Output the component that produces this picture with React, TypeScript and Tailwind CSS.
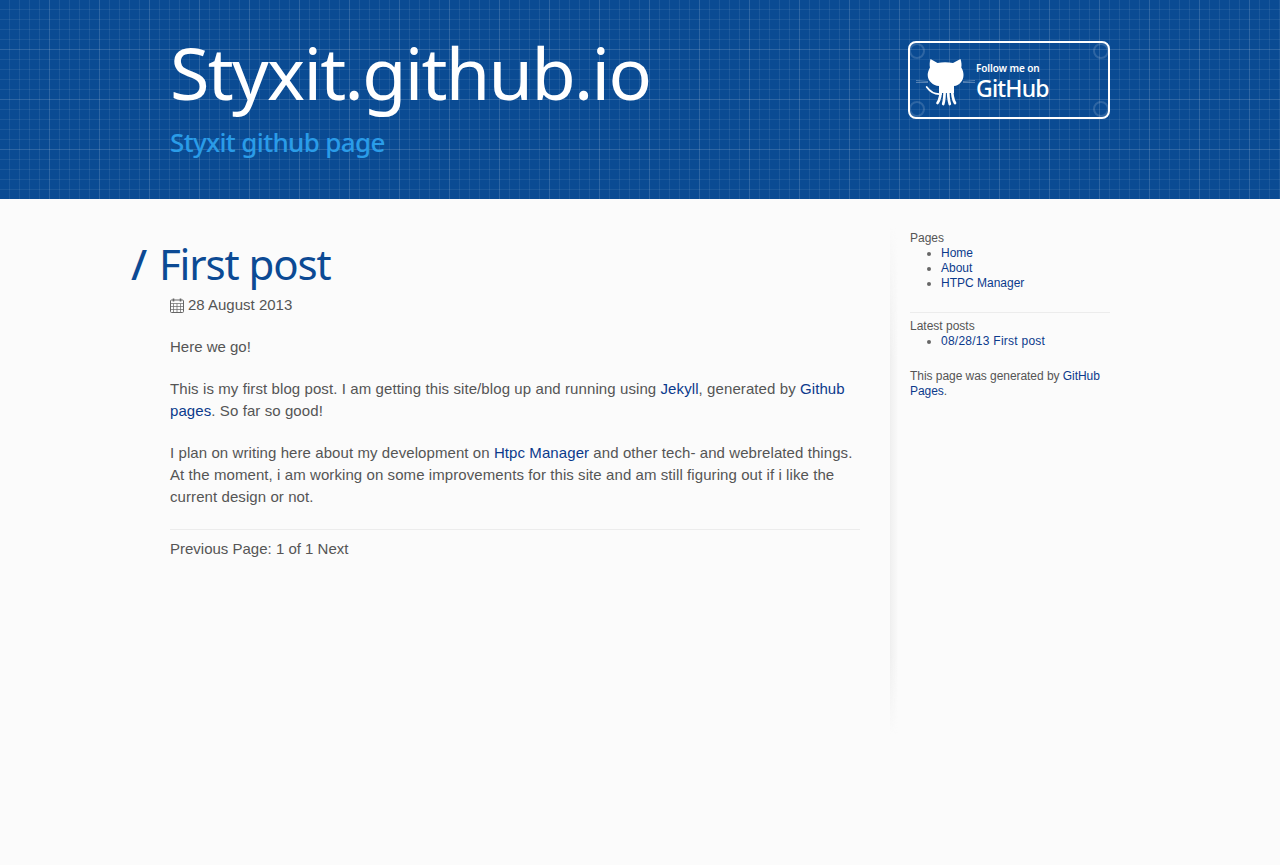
import React from 'react';

const linkClass = 'text-[#0b3a8c]';

function Octocat() {
  return (
    <svg viewBox="0 0 60 52" className="w-[60px] h-[52px] mt-[6px] shrink-0 text-white" fill="none" stroke="currentColor">
      <path
        d="M14.5 2 L21.5 6 C26 5 32 5 37 6 L44.5 2 C45.5 5 45.8 8 45.3 10.5 C47 13 47.5 16 47.5 18 C47.5 24 43 28.5 38 29 L38 36 L23 36 L23 29 C17 28.5 11.7 24 11.7 18 C11.7 16 12.5 13 14 10.5 C13.5 8 13.6 5 14.5 2 Z"
        fill="currentColor"
        stroke="none"
      />
      <path d="M25 30 C25 37 24.5 42 21.5 46 M28.7 30 C28.7 38 28.5 43 27.2 47 M32 30 C32 38 32.5 43 33.8 47 M36 30 C36 37 36.5 42 39 46" strokeWidth="2.7" strokeLinecap="round" />
      <path d="M25 37 C20 37.5 15 36 10.7 30" strokeWidth="1.8" strokeLinecap="round" />
      <path d="M0 23.5 L12 24.5 M0 25.5 L12 25.5 M47 24.5 L59 23.5 M47 25.5 L59 25.5" strokeWidth="0.5" opacity="0.6" />
    </svg>
  );
}

function CalendarIcon() {
  return (
    <svg viewBox="0 0 14 15" className="w-[14px] h-[15px] shrink-0 text-[#666]" fill="none" stroke="currentColor" strokeWidth="1">
      <rect x="0.5" y="2" width="13" height="12.5" rx="1" />
      <path d="M0.5 5.5 H13.5 M0.5 8.5 H13.5 M0.5 11.5 H13.5 M3.5 5.5 V14.5 M7 5.5 V14.5 M10.5 5.5 V14.5" strokeWidth="0.7" />
      <path d="M3.5 0.5 V3.5 M10.5 0.5 V3.5" strokeWidth="1.6" />
    </svg>
  );
}

function Corner({ className }: { className: string }) {
  return <span className={`absolute w-[16px] h-[16px] rounded-full border-2 border-white/15 ${className}`} />;
}

export default function App() {
  return (
    <div className="min-h-[865px] bg-[#fbfbfb] font-['Liberation_Sans',Arial,sans-serif] text-[#555]">
      <header className="h-[199px] bg-[#0a4b93] [background-image:linear-gradient(rgba(255,255,255,0.08)_1px,transparent_1px),linear-gradient(90deg,rgba(255,255,255,0.08)_1px,transparent_1px),linear-gradient(rgba(255,255,255,0.07)_1px,transparent_1px),linear-gradient(90deg,rgba(255,255,255,0.07)_1px,transparent_1px)] [background-size:50px_50px,50px_50px,10px_10px,10px_10px] [background-position:-1px_-1px,-1px_-1px,-1px_-1px,-1px_-1px]">
        <div className="w-[940px] mx-auto flex justify-between">
          <div className="pt-[28px] font-['Noto_Sans',sans-serif]">
            <h1 className="text-[72px] leading-[88px] text-white tracking-[-1.72px]">Styxit.github.io</h1>
            <p className="text-[26px] leading-[36px] mt-[8px] font-medium text-[#2a9ce8] tracking-[-0.65px]">Styxit github page</p>
          </div>
          <a className="relative mt-[41px] w-[202px] h-[78px] border-2 border-white rounded-[8px] flex items-center pl-[6px] text-white font-['Noto_Sans',sans-serif]">
            <Corner className="-left-[1px] top-[0px]" />
            <Corner className="-left-[1px] bottom-[0px]" />
            <Corner className="-right-[1px] top-[0px]" />
            <Corner className="-right-[1px] bottom-[0px]" />
            <Octocat />
            <span className="flex flex-col pt-[2px]">
              <span className="text-[10px] leading-[14px] font-semibold tracking-[-0.1px]">Follow me on</span>
              <span className="text-[23px] leading-[26px] font-medium tracking-[-0.8px]">GitHub</span>
            </span>
          </a>
        </div>
      </header>

      <div className="w-[940px] mx-auto flex">
        <main className="w-[690px] pt-[36px] text-[15px] leading-[22px]">
          <h2 className="-ml-[39px] text-[42px] leading-[58px] text-[#0c4a94] font-['Noto_Sans',sans-serif] tracking-[-1.1px]">
            <span className="font-medium mr-[3px]">/</span> First post
          </h2>
          <div className="flex items-center gap-[4px] mt-[1px]">
            <CalendarIcon />
            <span>28 August 2013</span>
          </div>
          <p className="mt-[20px]">Here we go!</p>
          <p className="mt-[20px] tracking-[0.09px]">
            This is my first blog post. I am getting this site/blog up and running using <a className={linkClass}>Jekyll</a>, generated by <a className={linkClass}>Github pages</a>. So far so good!
          </p>
          <p className="mt-[20px] tracking-[0.08px]">
            I plan on writing here about my development on <a className={linkClass}>Htpc Manager</a> and other tech- and webrelated things. At the moment, i am working on some improvements for this site and am still figuring out if i like the current design or not.
          </p>
          <div className="mt-[21px] pt-[8px] border-t border-[#ececec]">Previous Page: 1 of 1 Next</div>
        </main>

        <aside className="relative ml-[30px] w-[220px] pl-[20px] pt-[32px] text-[12px] leading-[15px]">
          <div className="absolute left-0 top-0 w-[8px] h-[536px] bg-gradient-to-r from-[#eeeeee] to-transparent [mask-image:linear-gradient(transparent_5%,#000_30%,#000_85%,transparent)]" />
          <div>Pages</div>
          <ul className="list-disc pl-[31px] marker:text-[#666]">
            <li><a className={linkClass}>Home</a></li>
            <li><a className={linkClass}>About</a></li>
            <li><a className={linkClass}>HTPC Manager</a></li>
          </ul>
          <hr className="mt-[21px] mb-[6px] border-[#ececec]" />
          <div>Latest posts</div>
          <ul className="list-disc pl-[31px] marker:text-[#666]">
            <li><a className={`${linkClass} tracking-[0.25px]`}>08/28/13 First post</a></li>
          </ul>
          <p className="mt-[20px] tracking-[-0.05px]">
            This page was generated by <a className={linkClass}>GitHub Pages</a>.
          </p>
        </aside>
      </div>
    </div>
  );
}
